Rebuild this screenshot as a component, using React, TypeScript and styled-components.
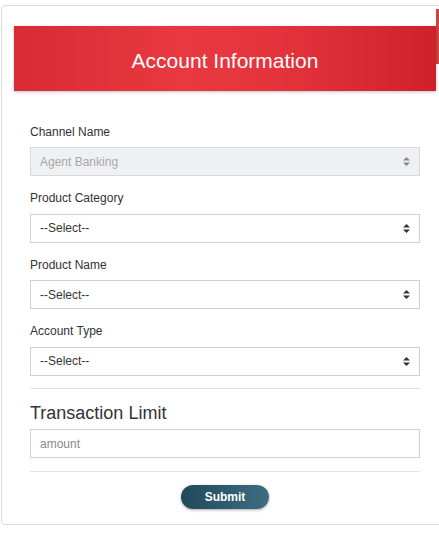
import React from "react";
import styled, { createGlobalStyle } from "styled-components";

const Global = createGlobalStyle`
  html, body { margin: 0; padding: 0; overflow: hidden; background: #fff; }
  body { font-family: "Liberation Sans", Arial, sans-serif; color: #333; }
  * { box-sizing: border-box; }
`;

const Page = styled.div`
  padding: 5px 0 0 1px;
`;

const Card = styled.div`
  position: relative;
  width: 448px;
  border: 1px solid #dcdcdc;
  border-radius: 4px;
  background: #fff;
  padding: 20px 12px 15px 12px;
`;

const EdgeStrip = styled.div`
  position: absolute;
  left: 434px;
  top: 3px;
  width: 12px;
  height: 55px;
  background: linear-gradient(to right, #c4423f, #d86a66);
`;

const Header = styled.div`
  position: relative;
  height: 65px;
  padding-top: 24px;
  text-align: center;
  color: #fff;
  font-size: 21px;
  line-height: 21px;
  background: linear-gradient(to right, #d92b35 0%, #e9383f 40%, #e5343c 60%, #d0212a 100%);
  box-shadow: 0 1px 3px rgba(0, 0, 0, 0.25);
`;

const Form = styled.div`
  display: flex;
  flex-direction: column;
  padding: 31px 16px 0 16px;
`;

const Group = styled.div`
  display: flex;
  flex-direction: column;
  margin-bottom: 12.5px;
`;

const Label = styled.label`
  font-size: 12px;
  line-height: 17px;
  color: #333;
  padding-top: 1.5px;
  margin-bottom: 6.5px;
`;

const SelectWrap = styled.div`
  position: relative;
  height: 29px;
`;

const Select = styled.select<{ $disabled?: boolean }>`
  appearance: none;
  -webkit-appearance: none;
  width: 100%;
  height: 29px;
  border: 1px solid ${(p) => (p.$disabled ? "#d7d9dc" : "#cdd1d6")};
  border-radius: 0;
  background: ${(p) => (p.$disabled ? "#eff0f2" : "#fff")};
  color: ${(p) => (p.$disabled ? "#a8a8a8" : "#333")};
  font-family: "Liberation Sans", Arial, sans-serif;
  font-size: 12px;
  padding: 0 9px;
  outline: none;
  opacity: 1;
`;

const Arrow = styled.svg<{ $muted?: boolean }>`
  position: absolute;
  right: 10px;
  top: 10px;
  width: 7px;
  height: 9px;
  fill: ${(p) => (p.$muted ? "#888" : "#333")};
  pointer-events: none;
`;

const Divider = styled.hr<{ $gap?: number }>`
  border: 0;
  border-top: 1px solid #e3e3e3;
  margin: 0 0 ${(p) => p.$gap ?? 0}px 0;
  width: 100%;
`;

const SectionTitle = styled.h3`
  margin: 0 0 6px 0;
  font-weight: normal;
  font-size: 18px;
  line-height: 20px;
  color: #333;
`;

const Input = styled.input`
  width: 100%;
  height: 29px;
  border: 1px solid #cdd1d6;
  padding: 0 9px;
  font-family: "Liberation Sans", Arial, sans-serif;
  font-size: 12px;
  color: #333;
  outline: none;
  margin-bottom: 13px;
  &::placeholder { color: #8a8a8a; }
`;

const ButtonRow = styled.div`
  display: flex;
  justify-content: center;
  padding-top: 13px;
`;

const SubmitButton = styled.button`
  width: 88px;
  height: 24px;
  border: 0;
  border-radius: 12px;
  background: linear-gradient(to right, #22495a, #3d6d83);
  color: #fff;
  font-family: "Liberation Sans", Arial, sans-serif;
  font-weight: bold;
  font-size: 12px;
  box-shadow: 0 1px 3px rgba(0, 0, 0, 0.35);
  cursor: pointer;
`;

const SortIcon = ({ muted }: { muted?: boolean }) => (
  <Arrow $muted={muted} viewBox="0 0 7 9">
    <path d="M3.5 0 L7 3.6 H0 Z M0 5.4 H7 L3.5 9 Z" />
  </Arrow>
);

const Field = ({ label, value, disabled }: { label: string; value: string; disabled?: boolean }) => (
  <Group>
    <Label>{label}</Label>
    <SelectWrap>
      <Select $disabled={disabled} disabled={disabled} defaultValue={value}>
        <option value={value}>{value}</option>
      </Select>
      <SortIcon muted={disabled} />
    </SelectWrap>
  </Group>
);

export default function App() {
  return (
    <>
      <Global />
      <Page>
        <Card>
          <EdgeStrip />
          <Header>Account Information</Header>
          <Form>
            <Field label="Channel Name" value="Agent Banking" disabled />
            <Field label="Product Category" value="--Select--" />
            <Field label="Product Name" value="--Select--" />
            <Field label="Account Type" value="--Select--" />
            <Divider $gap={14} />
            <SectionTitle>Transaction Limit</SectionTitle>
            <Input placeholder="amount" />
            <Divider />
            <ButtonRow>
              <SubmitButton>Submit</SubmitButton>
            </ButtonRow>
          </Form>
        </Card>
      </Page>
    </>
  );
}
